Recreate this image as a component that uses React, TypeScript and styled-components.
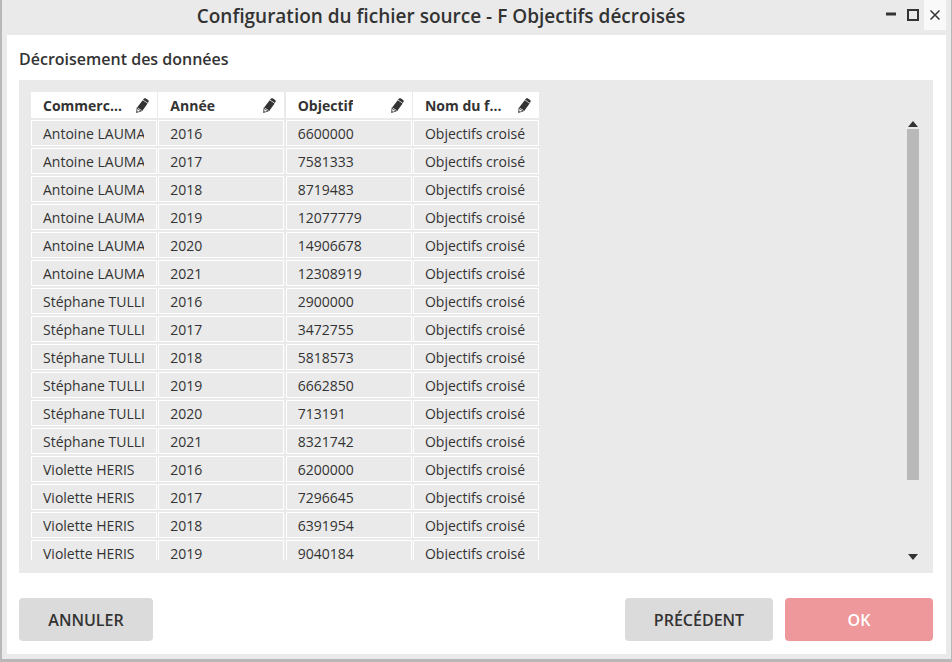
import React from "react";
import styled, { createGlobalStyle, css } from "styled-components";

const ink = "#333333";
const frame = "#eaeaea";

const GlobalStyle = createGlobalStyle`
  *, *::before, *::after { box-sizing: border-box; }
  body {
    margin: 0;
    color: ${ink};
    font-family: "Open Sans", "Noto Sans", sans-serif;
    font-size: 14px;
  }
  button { font-family: inherit; color: inherit; border: 0; padding: 0; cursor: pointer; }
`;

const Window = styled.div`
  display: flex;
  flex-direction: column;
  height: 100vh;
  background: ${frame};
  border: solid #b8b8b8;
  border-width: 0 1px 3px 2px;
`;

const TitleBar = styled.header`
  display: flex;
  flex: none;
  height: 35px;
  padding-right: 5px;
`;

const WindowTitle = styled.h1`
  flex: 1;
  margin: 0;
  font-size: 19px;
  font-weight: 600;
  line-height: 32px;
  text-align: center;
  white-space: nowrap;
`;

const WindowControls = styled.div`
  display: flex;
  flex: none;
  align-items: flex-start;
`;

const ControlButton = styled.button<{ $lit?: boolean }>`
  display: flex;
  align-items: center;
  justify-content: center;
  width: 22px;
  height: 30px;
  background: ${(p) => (p.$lit ? "#f9f9f9" : "transparent")};
`;

const Content = styled.main`
  display: flex;
  flex: 1;
  flex-direction: column;
  min-height: 0;
  margin: 0 5px 5px;
  padding: 12px 13px 13px 12px;
  background: #ffffff;
`;

const SectionTitle = styled.h2`
  margin: 0 0 8px;
  font-size: 16px;
  font-weight: 600;
  line-height: 25px;
`;

const Panel = styled.section`
  display: flex;
  flex: 1;
  justify-content: space-between;
  min-height: 0;
  padding: 12px 14px 13px 12px;
  background: ${frame};
`;

const TableViewport = styled.div`
  width: 508px;
  overflow: hidden;
`;

const Table = styled.table`
  display: block;
  width: 100%;
`;

const TableHead = styled.thead`
  display: block;
  margin-bottom: 2px;
`;

const TableBody = styled.tbody`
  display: grid;
  gap: 2px;
`;

const Row = styled.tr`
  display: grid;
  grid-template-columns: repeat(4, 126px);
  justify-content: space-between;
`;

const HeaderCell = styled.th`
  display: flex;
  align-items: center;
  justify-content: space-between;
  gap: 8px;
  height: 26px;
  padding: 0 8px 0 12px;
  background: #ffffff;
  font-weight: 700;
`;

const HeaderLabel = styled.span`
  overflow: hidden;
  white-space: nowrap;
`;

const EditButton = styled.button`
  display: flex;
  flex: none;
  background: transparent;
`;

const Cell = styled.td`
  height: 26px;
  padding: 1px 12px 0 11px;
  border: 1px solid #ffffff;
  line-height: 23px;
`;

const CellText = styled.div`
  overflow: hidden;
  white-space: nowrap;
`;

const ScrollRail = styled.div`
  display: flex;
  flex-direction: column;
  align-items: center;
  width: 12px;
  padding-top: 29px;
`;

const ScrollButton = styled.button`
  display: flex;
  background: transparent;
`;

const ScrollTrack = styled.div`
  flex: 1;
  width: 100%;
  min-height: 0;
  margin: 2px 0;
`;

const ScrollThumb = styled.div`
  height: 83%;
  background: #b9b9b9;
`;

const Actions = styled.footer`
  display: flex;
  gap: 12px;
  margin-top: 25px;
`;

const ActionButton = styled.button<{ $primary?: boolean; $leading?: boolean }>`
  min-width: ${(p) => (p.$leading ? "134px" : "148px")};
  height: 43px;
  background: #dbdbdb;
  border-radius: 4px;
  font-size: 16px;
  font-weight: 600;
  ${(p) => p.$leading && css`margin-right: auto;`}
  ${(p) => p.$primary && css`background: #ee989b; color: #ffffff;`}
`;

const Pencil = () => (
  <svg width="13" height="15" viewBox="0 0 13 15" fill={ink} aria-hidden="true">
    <path d="M7.900 .6Q8.600 -.1 9.600 .3L12.100 1.900Q13 2.600 12.600 3.600L11.900 4.900L7.100 1.700Z" />
    <path d="M6.700 2.200L11.600 5.500L6.200 12.900Q5.200 12.500 4.800 11.400Q3.300 11.300 2.800 10.100Q1.500 10 1.100 9.400Z" />
    <path fillRule="evenodd" d="M.7 9.600L.2 14.900L5.700 13.200L4.400 12Q2.900 11.900 2.300 10.600ZM1.400 10.800L2 11.200Q2.500 12.200 3.700 12.500L4.200 13L1.900 13.700L1.200 13.100Z" />
  </svg>
);

const columns = ["Commerc...", "Année", "Objectif", "Nom du f..."];

const groups: [string, number[]][] = [
  ["Antoine LAUMA", [6600000, 7581333, 8719483, 12077779, 14906678, 12308919]],
  ["Stéphane TULLI", [2900000, 3472755, 5818573, 6662850, 713191, 8321742]],
  ["Violette HERIS", [6200000, 7296645, 6391954, 9040184]],
];

const rows = groups.flatMap(([name, goals]) =>
  goals.map((goal, i) => [name, String(2016 + i), String(goal), "Objectifs croisé"])
);

export default function App() {
  return (
    <>
      <GlobalStyle />
      <Window>
        <TitleBar>
          <WindowTitle>Configuration du fichier source - F Objectifs décroisés</WindowTitle>
          <WindowControls>
            <ControlButton aria-label="Réduire">
              <svg width="10" height="10" viewBox="0 0 10 10"><path d="M0 4h10" stroke={ink} strokeWidth="3" /></svg>
            </ControlButton>
            <ControlButton aria-label="Agrandir">
              <svg width="12" height="12" viewBox="0 0 12 12"><rect x="1" y="1" width="10" height="10" fill="none" stroke={ink} strokeWidth="2" /></svg>
            </ControlButton>
            <ControlButton aria-label="Fermer" $lit>
              <svg width="10" height="10" viewBox="0 0 10 10"><path d="M.5 .5l9 9M9.500 .5l-9 9" stroke={ink} strokeWidth="1.500" /></svg>
            </ControlButton>
          </WindowControls>
        </TitleBar>
        <Content>
          <SectionTitle>Décroisement des données</SectionTitle>
          <Panel>
            <TableViewport>
              <Table>
                <TableHead>
                  <Row>
                    {columns.map((label) => (
                      <HeaderCell key={label} scope="col">
                        <HeaderLabel>{label}</HeaderLabel>
                        <EditButton aria-label={`Renommer ${label}`}><Pencil /></EditButton>
                      </HeaderCell>
                    ))}
                  </Row>
                </TableHead>
                <TableBody>
                  {rows.map((row, r) => (
                    <Row key={r}>
                      {row.map((value, c) => (
                        <Cell key={c}><CellText>{value}</CellText></Cell>
                      ))}
                    </Row>
                  ))}
                </TableBody>
              </Table>
            </TableViewport>
            <ScrollRail>
              <ScrollButton aria-label="Défiler vers le haut">
                <svg width="10" height="6" viewBox="0 0 10 6"><path d="M0 6L5 0L10 6Z" fill={ink} /></svg>
              </ScrollButton>
              <ScrollTrack><ScrollThumb /></ScrollTrack>
              <ScrollButton aria-label="Défiler vers le bas">
                <svg width="10" height="6" viewBox="0 0 10 6"><path d="M0 0L5 6L10 0Z" fill={ink} /></svg>
              </ScrollButton>
            </ScrollRail>
          </Panel>
          <Actions>
            <ActionButton $leading>ANNULER</ActionButton>
            <ActionButton>PRÉCÉDENT</ActionButton>
            <ActionButton $primary>OK</ActionButton>
          </Actions>
        </Content>
      </Window>
    </>
  );
}
